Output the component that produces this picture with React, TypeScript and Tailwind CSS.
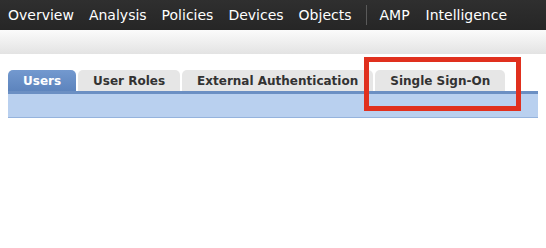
import React from "react";

const nav = ["Overview", "Analysis", "Policies", "Devices", "Objects"];

export default function App() {
  return (
    <div className="w-[546px] h-[248px] bg-white overflow-hidden relative" style={{ fontFamily: '"DejaVu Sans", Verdana, sans-serif' }}>
      <div className="h-[30px] bg-gradient-to-b from-[#2f2f2f] to-[#262626] flex items-center pl-[8px] text-[14px] text-white leading-none">
        {nav.map((n) => (
          <span key={n} className="mr-[15px]">{n}</span>
        ))}
        <span className="w-px h-[20px] bg-[#5a5a5a] mr-[12px]" />
        <span className="mr-[16px]">AMP</span>
        <span>Intelligence</span>
      </div>
      <div className="h-[24px] bg-gradient-to-b from-[#fbfbfb] to-[#e3e3e3]" />
      <div className="pt-[16px] px-[8px]">
        <div className="flex items-end h-[21px] text-[12px] font-bold leading-none">
          <div className="h-[21px] px-[15px] flex items-center rounded-t-[5px] bg-gradient-to-b from-[#7399cf] to-[#5d84bd] text-white">Users</div>
          <div className="ml-[2px] h-[21px] px-[15px] flex items-center rounded-t-[5px] bg-[#e6e6e6] text-[#333]">User Roles</div>
          <div className="ml-[2px] h-[21px] px-[15px] flex items-center rounded-t-[5px] bg-[#e6e6e6] text-[#333]">External Authentication</div>
          <div className="ml-[2px] h-[21px] px-[15px] flex items-center rounded-t-[5px] bg-[#e6e6e6] text-[#333]">Single Sign-On</div>
        </div>
        <div className="h-[3px] bg-[#6b8fc3]" />
        <div className="h-[24px] bg-[#b9d0ef] border-b border-[#95b3dd]" />
      </div>
      <div className="absolute left-[364px] top-[57px] w-[157px] h-[54px] border-[5px] border-[#e0301e]" />
    </div>
  );
}
